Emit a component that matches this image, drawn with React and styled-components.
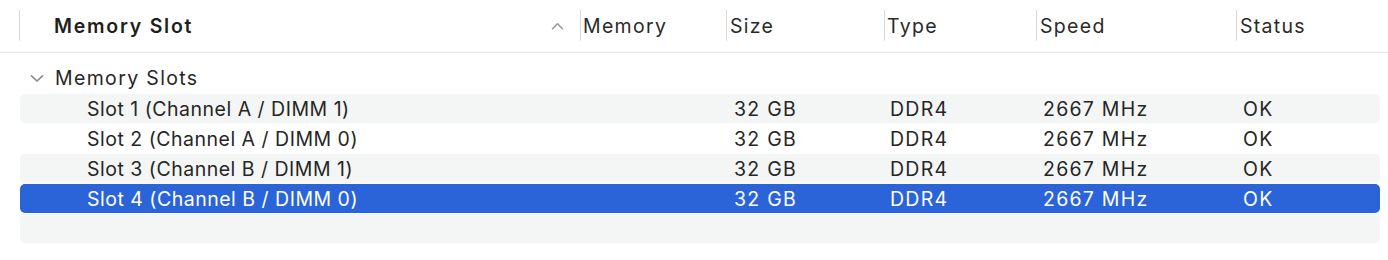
import React from "react";
import styled, { createGlobalStyle } from "styled-components";

const Global = createGlobalStyle`
  html, body { margin: 0; padding: 0; background: #ffffff; }
  body { font-family: Inter, "Open Sans", "Liberation Sans", sans-serif; color: #262626; }
`;

const COLS = "561px 146px 158px 152px 200px 143px";

const Page = styled.div`
  width: 1388px;
  height: 260px;
  background: #fff;
`;

const Header = styled.div`
  height: 52px;
  border-bottom: 1px solid #e3e3e3;
  padding-left: 19px;
  display: grid;
  grid-template-columns: ${COLS};
  align-items: start;
`;

const HeadCell = styled.div`
  margin-top: 10px;
  height: 31px;
  border-left: 1px solid #d9d9d9;
  display: flex;
  align-items: center;
  padding-left: ${(p) => p.$pad ?? 2}px;
  padding-right: ${(p) => p.$padRight ?? 0}px;
  font-size: 19.5px;
  font-weight: ${(p) => (p.$bold ? 600 : 400)};
  color: ${(p) => (p.$bold ? "#1f1f1f" : "#2a2a2a")};
  justify-content: ${(p) => (p.$spread ? "space-between" : "flex-start")};
  letter-spacing: ${(p) => (p.$bold ? 1.75 : 1.3)}px;
`;

const SortIcon = styled.svg`
  width: 13px;
  height: 8px;
  display: block;
`;

const Body = styled.div`
  padding: 10px 8px 0 20px;
  display: flex;
  flex-direction: column;
  gap: 1px;
`;

const GroupRow = styled.div`
  height: 30px;
  display: flex;
  align-items: center;
  padding-left: 10px;
  gap: 11px;
  font-size: 19.5px;
  letter-spacing: 1.35px;
  color: #262626;
`;

const Row = styled.div`
  height: 29px;
  border-radius: 5px;
  display: grid;
  grid-template-columns: ${COLS};
  align-items: center;
  font-size: 19.5px;
  background: ${(p) => (p.$selected ? "#2b63d9" : p.$stripe ? "#f4f5f5" : "transparent")};
  color: ${(p) => (p.$selected ? "#ffffff" : "#262626")};
`;

const Cell = styled.div`
  padding-left: ${(p) => p.$pad ?? 6}px;
  white-space: nowrap;
  letter-spacing: ${(p) => p.$track ?? 1.25}px;
`;

const rows = [
  { name: "Slot 1 (Channel A / DIMM 1)" },
  { name: "Slot 2 (Channel A / DIMM 0)" },
  { name: "Slot 3 (Channel B / DIMM 1)" },
  { name: "Slot 4 (Channel B / DIMM 0)", selected: true },
];

export default function App() {
  return (
    <Page>
      <Global />
      <Header>
        <HeadCell $bold $pad={34} $padRight={16} $spread>
          <span>Memory Slot</span>
          <SortIcon viewBox="0 0 13 8">
            <path d="M1.5 6.8 L6.5 1.8 L11.5 6.8" fill="none" stroke="#9a9a9a" strokeWidth="1.6" strokeLinecap="round" strokeLinejoin="round" />
          </SortIcon>
        </HeadCell>
        <HeadCell>Memory</HeadCell>
        <HeadCell $pad={3}>Size</HeadCell>
        <HeadCell>Type</HeadCell>
        <HeadCell $pad={3}>Speed</HeadCell>
        <HeadCell $pad={3}>Status</HeadCell>
      </Header>
      <Body>
        <GroupRow>
          <svg width="14" height="9" viewBox="0 0 14 9">
            <path d="M1.5 1.8 L7 7 L12.5 1.8" fill="none" stroke="#8a8a8a" strokeWidth="1.7" strokeLinecap="round" strokeLinejoin="round" />
          </svg>
          <span>Memory Slots</span>
        </GroupRow>
        {rows.map((r, i) => (
          <Row key={r.name} $stripe={i % 2 === 0} $selected={r.selected}>
            <Cell $pad={67} $track={0.5}>{r.name}</Cell>
            <Cell />
            <Cell $pad={7}>32 GB</Cell>
            <Cell $pad={5}>DDR4</Cell>
            <Cell $pad={6}>2667 MHz</Cell>
            <Cell $pad={6}>OK</Cell>
          </Row>
        ))}
        <Row $stripe />
      </Body>
    </Page>
  );
}
